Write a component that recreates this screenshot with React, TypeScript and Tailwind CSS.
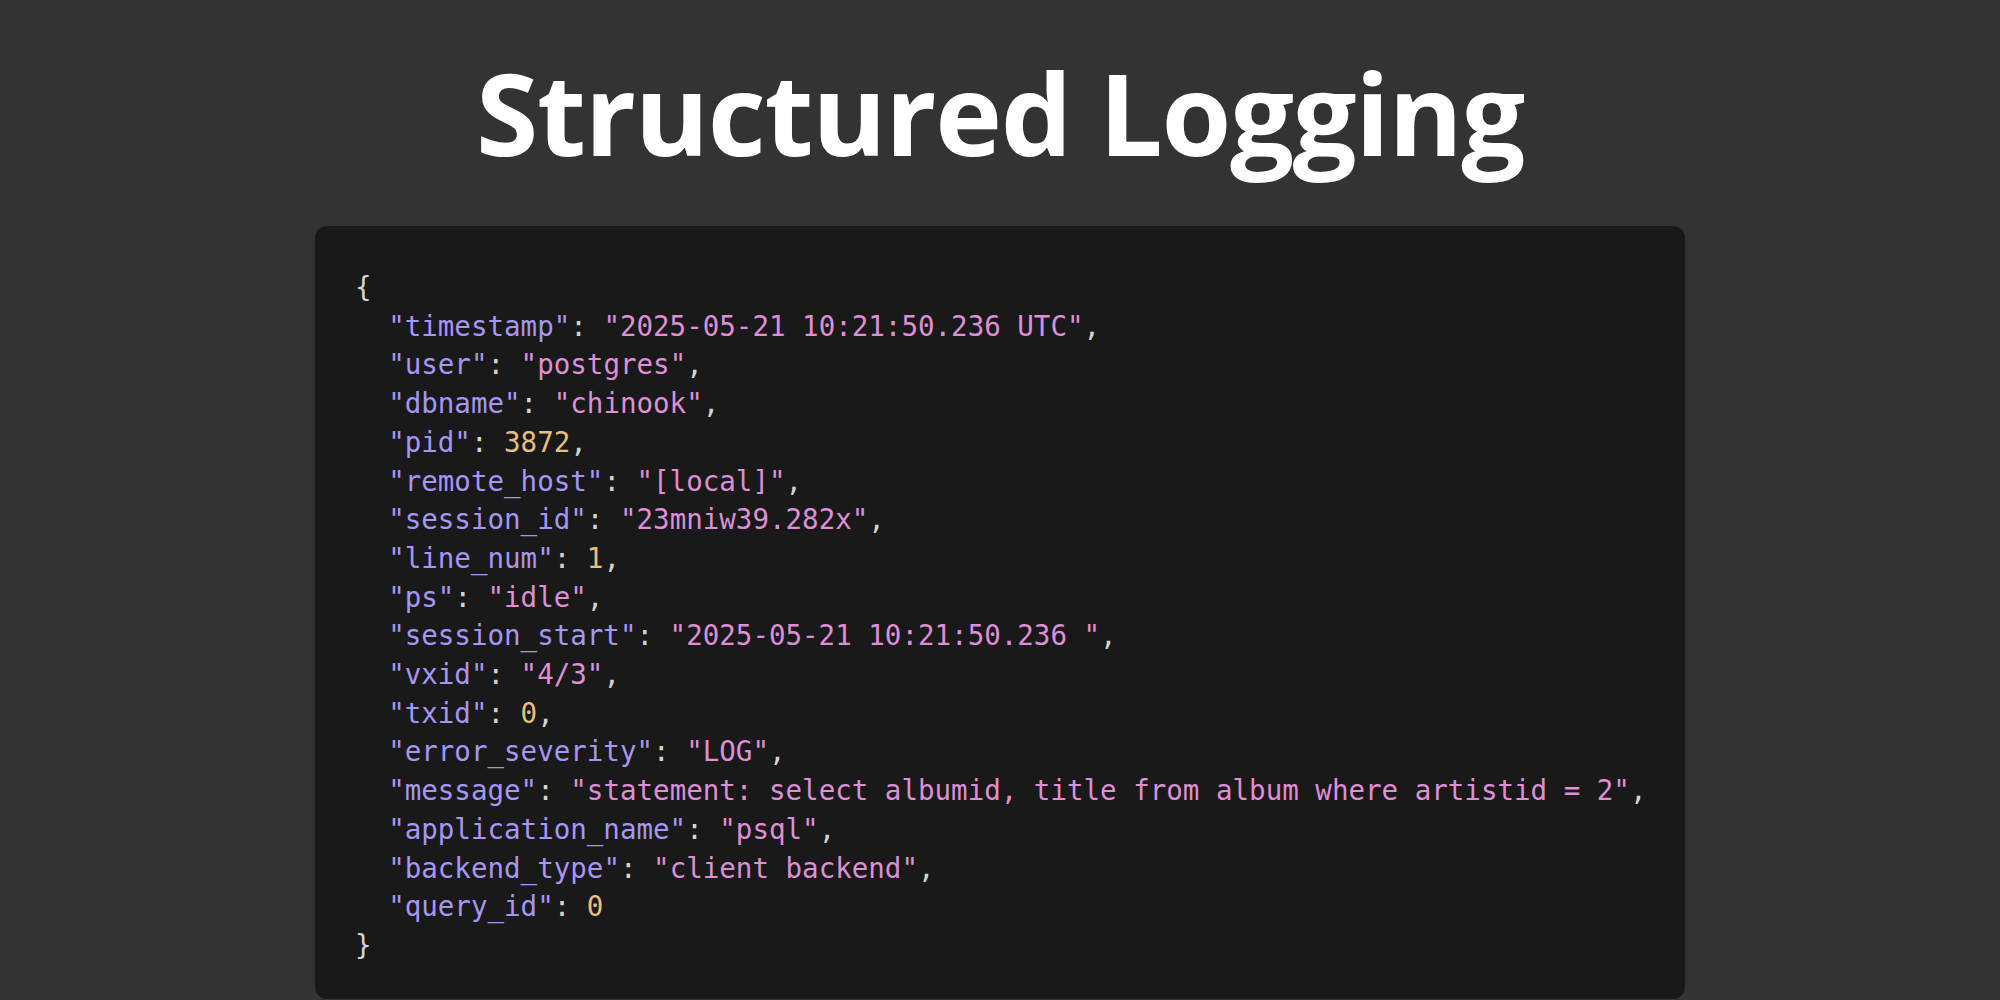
const KEY = "text-[#a597f2]";
const STR = "text-[#de8fd6]";
const NUM = "text-[#e8c07d]";
const PUN = "text-[#d4d4d4]";

type Field = { key: string; value: string; kind: "str" | "num" };

const fields: Field[] = [
  { key: "timestamp", value: "2025-05-21 10:21:50.236 UTC", kind: "str" },
  { key: "user", value: "postgres", kind: "str" },
  { key: "dbname", value: "chinook", kind: "str" },
  { key: "pid", value: "3872", kind: "num" },
  { key: "remote_host", value: "[local]", kind: "str" },
  { key: "session_id", value: "23mniw39.282x", kind: "str" },
  { key: "line_num", value: "1", kind: "num" },
  { key: "ps", value: "idle", kind: "str" },
  { key: "session_start", value: "2025-05-21 10:21:50.236 ", kind: "str" },
  { key: "vxid", value: "4/3", kind: "str" },
  { key: "txid", value: "0", kind: "num" },
  { key: "error_severity", value: "LOG", kind: "str" },
  {
    key: "message",
    value: "statement: select albumid, title from album where artistid = 2",
    kind: "str",
  },
  { key: "application_name", value: "psql", kind: "str" },
  { key: "backend_type", value: "client backend", kind: "str" },
  { key: "query_id", value: "0", kind: "num" },
];

export default function App() {
  return (
    <div className="h-[1000px] w-full overflow-hidden bg-[#333333] flex flex-col items-center pt-[56px]">
      <h1 className="font-['Open_Sans',sans-serif] font-bold text-white text-[113px] leading-none tracking-[-1.3px] h-[113px] whitespace-nowrap">
        Structured Logging
      </h1>

      <div className="mt-[57px] w-[1370px] h-[773px] rounded-xl bg-[#191919] pl-[40px] pr-[42px] pt-[42px]">
        <pre className="font-['DejaVu_Sans_Mono',monospace] text-[27.5px] leading-[38.7px] whitespace-pre">
          <div className={PUN}>{"{"}</div>
          {fields.map((f, i) => (
            <div key={f.key}>
              <span>{"  "}</span>
              <span className={KEY}>"{f.key}"</span>
              <span className={PUN}>: </span>
              {f.kind === "str" ? (
                <span className={STR}>"{f.value}"</span>
              ) : (
                <span className={NUM}>{f.value}</span>
              )}
              {i < fields.length - 1 && <span className={PUN}>,</span>}
            </div>
          ))}
          <div className={PUN}>{"}"}</div>
        </pre>
      </div>
    </div>
  );
}
